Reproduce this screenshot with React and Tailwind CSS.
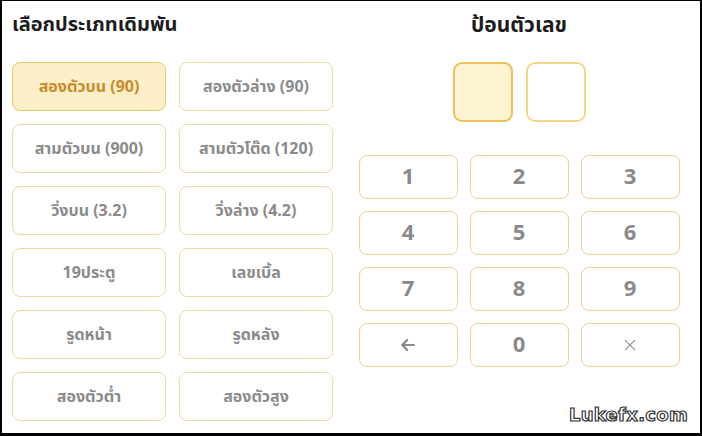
import React, { useState } from "react";

const betTypes = [
  "สองตัวบน (90)",
  "สองตัวล่าง (90)",
  "สามตัวบน (900)",
  "สามตัวโต๊ด (120)",
  "วิ่งบน (3.2)",
  "วิ่งล่าง (4.2)",
  "19ประตู",
  "เลขเบิ้ล",
  "รูดหน้า",
  "รูดหลัง",
  "สองตัวต่ำ",
  "สองตัวสูง",
];

const keys = ["1", "2", "3", "4", "5", "6", "7", "8", "9", "back", "0", "clear"];

function BackArrow() {
  return (
    <svg width="20" height="20" viewBox="0 0 24 24" fill="none" stroke="currentColor" strokeWidth="2.6" strokeLinecap="round" strokeLinejoin="round">
      <path d="M19 12H6" />
      <path d="M11 6l-6 6 6 6" />
    </svg>
  );
}

function Cross() {
  return (
    <svg width="16" height="16" viewBox="0 0 24 24" fill="none" stroke="currentColor" strokeWidth="1.6" strokeLinecap="round">
      <path d="M5 5l14 14M19 5L5 19" />
    </svg>
  );
}

export default function App() {
  const [selected, setSelected] = useState(0);
  const [digits, setDigits] = useState([]);

  const press = (k) => {
    if (k === "back") setDigits(digits.slice(0, -1));
    else if (k === "clear") setDigits([]);
    else if (digits.length < 2) setDigits([...digits, k]);
  };

  return (
    <div className="relative w-[702px] h-[436px] overflow-hidden bg-white border-l-2 border-r-2 border-t border-b-[3px] border-black font-['Noto_Sans_Thai','Noto_Sans',Tahoma,sans-serif]">
      <div className="flex">
        {/* bet type list */}
        <div className="w-[344px] pl-[10px] pt-[10px]">
          <h2 className="h-[29px] text-[20px] leading-[29px] font-bold text-[#1d1d1d]">เลือกประเภทเดิมพัน</h2>
          <div className="mt-[22px] grid grid-cols-[154px_154px] gap-x-[13px] gap-y-[13px]">
            {betTypes.map((t, i) => (
              <button
                key={t}
                onClick={() => setSelected(i)}
                className={`h-[49px] rounded-[8px] border text-[16px] font-bold ${
                  selected === i
                    ? "bg-[#fdf0c9] border-[#e9c66c] text-[#c98b2c]"
                    : "bg-white border-[#ecdba5] text-[#8b8b8b]"
                }`}
              >
                {t}
              </button>
            ))}
            {/* next row, scrolled below the fold */}
            <div className="h-[49px] rounded-[8px] border border-[#d9b57a]" />
            <div className="h-[49px] rounded-[8px] border border-[#d9b57a]" />
          </div>
        </div>

        {/* number entry */}
        <div className="w-[322px] ml-[12px] pt-[10px] flex flex-col items-center">
          <h2 className="h-[29px] text-[21px] leading-[29px] font-bold text-[#1d1d1d]">ป้อนตัวเลข</h2>
          <div className="mt-[22px] flex gap-[13px]">
            {[0, 1].map((i) => (
              <div
                key={i}
                className={`w-[60px] h-[60px] rounded-[9px] flex items-center justify-center text-[26px] font-bold text-[#555] ${
                  i === digits.length || (digits.length === 2 && i === 1)
                    ? "bg-[#fef4d4] border-2 border-[#eec057]"
                    : "bg-white border-2 border-[#f5d78a]"
                }`}
              >
                {digits[i] || ""}
              </div>
            ))}
          </div>
          <div className="mt-[33px] grid grid-cols-[99px_99px_99px] gap-x-[12px] gap-y-[12px]">
            {keys.map((k) => (
              <button
                key={k}
                onClick={() => press(k)}
                className="h-[44px] rounded-[8px] border-[1.5px] border-[#f0cf98] bg-white flex items-center justify-center text-[22px] font-bold text-[#8a8a8a]"
              >
                {k === "back" ? <BackArrow /> : k === "clear" ? <Cross /> : k}
              </button>
            ))}
          </div>
        </div>
      </div>

      <div className="absolute right-[12px] bottom-[5px] text-[18px] font-bold tracking-[0.3px] text-white [-webkit-text-stroke:1.2px_#333] font-['Verdana','DejaVu_Sans',sans-serif]">
        Lukefx.com
      </div>
    </div>
  );
}
